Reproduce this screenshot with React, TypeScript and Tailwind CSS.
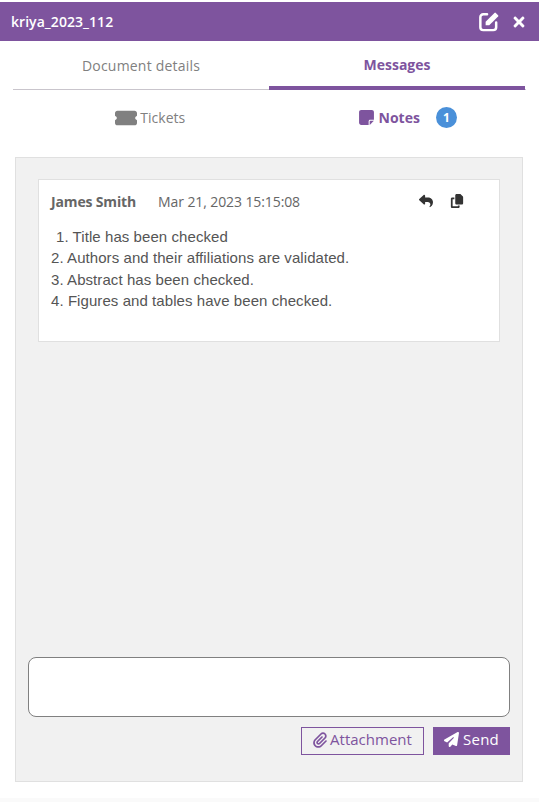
import { FaTimes } from "react-icons/fa";
import { FaTicketSimple, FaNoteSticky, FaReply, FaCopy, FaPaperclip, FaPaperPlane } from "react-icons/fa6";

function EditIcon() {
  return (
    <svg viewBox="0 0 24 24" className="h-[23px] w-[23px]">
      <path d="M10.5 4.5H6.5a3 3 0 0 0-3 3v10.5a3 3 0 0 0 3 3H17a3 3 0 0 0 3-3v-5" fill="none" stroke="currentColor" strokeWidth="2.6" strokeLinecap="round" />
      <path d="M9 12.2 18.2 3a1 1 0 0 1 1.4 0l2.4 2.4a1 1 0 0 1 0 1.4L12.8 16H9z" fill="currentColor" />
    </svg>
  );
}

export default function App() {
  return (
    <div className="flex h-[802px] w-[539px] flex-col overflow-hidden bg-white pt-[2px] font-['Open_Sans',sans-serif]">
      <header className="flex h-[39px] items-center justify-between bg-[#7e549e] pl-[11px] pr-[13px] text-white">
        <span className="text-[14px] font-semibold tracking-[0.05px]">kriya_2023_112</span>
        <div className="flex items-center gap-[12px]">
          <EditIcon />
          <FaTimes className="h-[16px] w-[14px]" />
        </div>
      </header>

      <nav className="mx-[13px] grid h-[49px] grid-cols-[256px_256px] border-b border-[#c9c5cc] text-[14px]">
        <div className="flex items-center justify-center text-[#808080] tracking-[0.2px]">Document details</div>
        <div className="mb-[-1px] flex items-center justify-center border-b-[4px] border-[#7e549e] pt-[1px] font-bold text-[#7e549e]">Messages</div>
      </nav>

      <div className="grid h-[67px] grid-cols-2 pb-[12px] text-[14px]">
        <div className="flex items-center justify-center gap-[3px] pl-[31px] text-[#808080]">
          <FaTicketSimple className="h-[22px] w-[22px]" />
          <span>Tickets</span>
        </div>
        <div className="flex items-center justify-center pl-[6px] text-[#7e549e]">
          <FaNoteSticky className="mr-[4px] h-[17px] w-[17px]" />
          <span className="font-bold">Notes</span>
          <span className="ml-[16px] flex h-[21px] w-[21px] items-center justify-center rounded-full bg-[#4a90d9] text-[12px] font-bold text-white">1</span>
        </div>
      </div>

      <main className="mx-[15px] flex h-[625px] w-[508px] flex-col border border-[#e0e0e0] bg-[#f1f1f1] pb-[26px] pl-[12px] pr-[12px] pt-[21px]">
        <article className="mx-[10px] h-[163px] border border-[#e0e0e0] bg-white px-[12px] pt-[10px]">
          <div className="flex h-[22px] items-center text-[14px]">
            <span className="font-bold tracking-[-0.15px] text-[#666666]">James Smith</span>
            <span className="ml-[22px] tracking-[-0.1px] text-[#666666]">Mar 21, 2023 15:15:08</span>
            <div className="ml-[119px] flex items-center gap-[17px] text-[#333333]">
              <FaReply className="h-[14px] w-[14px]" />
              <FaCopy className="h-[14px] w-[14px]" />
            </div>
          </div>
          <div className="mt-[14px] font-['Liberation_Sans',sans-serif] text-[15px] leading-[21.3px] tracking-[0.07px] text-[#555555]">
            <p className="pl-[5px]">1. Title has been checked</p>
            <p>2. Authors and their affiliations are validated.</p>
            <p>3. Abstract has been checked.</p>
            <p>4. Figures and tables have been checked.</p>
          </div>
        </article>

        <div className="mt-auto h-[60px] rounded-[8px] border border-[#808080] bg-white" />

        <div className="mt-[10px] flex justify-end gap-[9px] text-[15px]">
          <button className="flex h-[28px] w-[123px] items-center justify-center gap-[3px] border border-[#7e549e] pb-[3px] text-[#7e549e]">
            <FaPaperclip className="h-[16px] w-[14px]" />
            <span>Attachment</span>
          </button>
          <button className="flex h-[28px] w-[77px] items-center justify-center gap-[4px] bg-[#7e549e] pb-[3px] text-white">
            <FaPaperPlane className="h-[15px] w-[15px]" />
            <span className="tracking-[0.2px]">Send</span>
          </button>
        </div>
      </main>

      <div className="mt-[16px] h-[4px] bg-[#fafafa]" />
    </div>
  );
}
